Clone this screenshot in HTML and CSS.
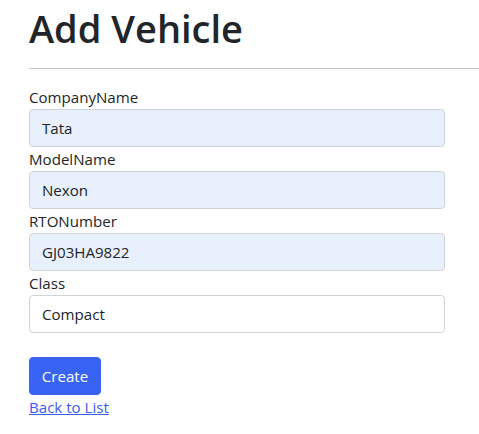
FILE: index.html
```html
<!DOCTYPE html>
<html lang="en">
<head>
<meta charset="utf-8">
<title>Add Vehicle</title>
<link rel="stylesheet" href="styles.css">
</head>
<body>
<main class="page">
  <h1 class="title">Add Vehicle</h1>
  <hr class="rule">
  <form class="form">
    <div class="field">
      <label class="label" for="company">CompanyName</label>
      <input class="input autofilled" id="company" type="text" value="Tata">
    </div>
    <div class="field">
      <label class="label" for="model">ModelName</label>
      <input class="input autofilled" id="model" type="text" value="Nexon">
    </div>
    <div class="field">
      <label class="label" for="rto">RTONumber</label>
      <input class="input autofilled" id="rto" type="text" value="GJ03HA9822">
    </div>
    <div class="field">
      <label class="label" for="class">Class</label>
      <input class="input" id="class" type="text" value="Compact">
    </div>
    <div class="actions">
      <button class="btn" type="button">Create</button>
    </div>
  </form>
  <div class="back">
    <a class="link" href="#">Back to List</a>
  </div>
</main>
</body>
</html>
```

FILE: styles.css
```css
* { box-sizing: border-box; }
html, body { margin: 0; padding: 0; }
body {
  font-family: "Open Sans", "Noto Sans", sans-serif;
  font-size: 15.1px;
  line-height: 24px;
  color: #212529;
  background: #fff;
  overflow: hidden;
}
.page {
  padding: 4px 0 0 29px;
}
.title {
  margin: 0;
  font-size: 38px;
  font-weight: 600;
  line-height: 48px;
  letter-spacing: 0;
}
.rule {
  margin: 16px 0;
  border: 0;
  border-top: 1px solid #c8c9ca;
  height: 0;
}
.form {
  width: 416px;
  display: flex;
  flex-direction: column;
}
.field {
  display: flex;
  flex-direction: column;
}
.label {
  display: block;
  height: 24px;
}
.input {
  display: block;
  width: 100%;
  height: 38px;
  padding: 6px 12px;
  font: inherit;
  color: #212529;
  background: #fff;
  border: 1px solid #ced4da;
  border-radius: 4px;
  outline: none;
}
.input.autofilled {
  background: #e8f0fe;
}
.actions {
  padding-top: 24px;
}
.btn {
  display: inline-block;
  height: 38px;
  width: 72px;
  padding: 6px 0;
  font: inherit;
  color: #fff;
  background: #3863f5;
  border: 1px solid #3863f5;
  border-radius: 4px;
}
.back {
  height: 24px;
}
.link {
  color: #3b5cf6;
  text-decoration: underline;
}
```
